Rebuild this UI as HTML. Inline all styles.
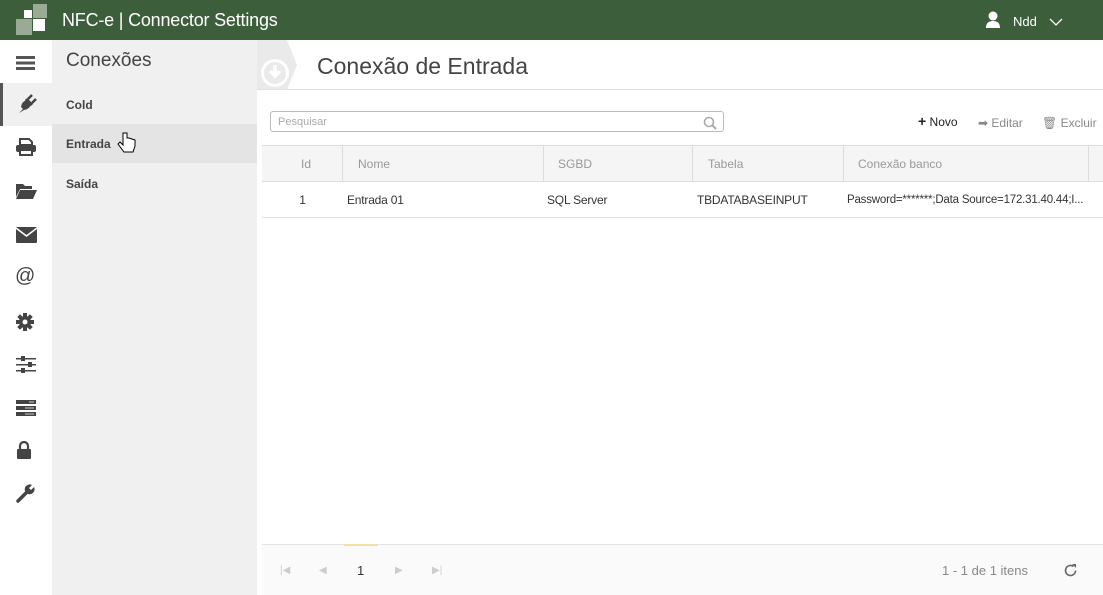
<!DOCTYPE html>
<html><head><meta charset="utf-8"><style>
*{box-sizing:border-box;margin:0;padding:0}
body{width:1103px;height:595px;overflow:hidden;font-family:"Liberation Sans",sans-serif;background:#fff;position:relative;color:#333}
.hdr{position:absolute;left:0;top:0;width:1103px;height:40px;background:#3d5e3b}
.abs{position:absolute;white-space:nowrap}
.side{position:absolute;left:0;top:40px;width:52px;height:555px;background:#fff}
.sub{position:absolute;left:52px;top:40px;width:205px;height:555px;background:#f0f0f0}
.ico{position:absolute;left:16px}
.th{position:absolute;top:146px;height:36px;line-height:36px;font-size:12px;color:#999;border-right:1px solid #ddd}
.td{position:absolute;top:182px;height:36px;line-height:36px;font-size:12px;color:#333;white-space:nowrap;letter-spacing:-0.2px}
</style></head><body>
<div class="hdr">
 <div class="abs" style="left:24px;top:10px;width:8px;height:8px;background:#fff"></div>
 <div class="abs" style="left:33px;top:4px;width:14px;height:14px;background:#9aaa97"></div>
 <div class="abs" style="left:16px;top:19px;width:16px;height:16px;background:#9aaa97"></div>
 <div class="abs" style="left:33px;top:19px;width:12px;height:12px;background:#fff"></div>
 <div class="abs" style="left:62px;top:10px;font-size:18px;color:#fff;letter-spacing:-0.2px">NFC-e | Connector Settings</div>
 <svg class="abs" style="left:985px;top:11px" width="16" height="18" viewBox="0 0 16 18"><circle cx="8" cy="5" r="4.5" fill="#fff"/><path d="M1 17 Q1 10 8 10 Q15 10 15 17Z" fill="#fff"/></svg>
 <div class="abs" style="left:1013px;top:14px;font-size:13px;color:#fff">Ndd</div>
 <svg class="abs" style="left:1049px;top:18px" width="14" height="8"><path d="M1 1 L7 7 L13 1" stroke="#fff" fill="none" stroke-width="1.3"/></svg>
</div>
<div class="side">
 <div class="abs" style="left:0;top:43px;width:52px;height:43px;background:#f0f0f0;border-left:3px solid #555"></div>
 <svg class="ico" style="top:16px" width="20" height="14"><rect y="0" width="19" height="3" fill="#555"/><rect y="5.5" width="19" height="3" fill="#555"/><rect y="11" width="19" height="3" fill="#555"/></svg>
 <svg class="ico" style="top:53px" width="22" height="22" viewBox="0 0 22 22"><path d="M3 20 L7 16 L5 14 Q6 8 11 7 L15 11 Q14 16 8 17 Z" fill="#444"/><path d="M12 6 L16 2 M16 10 L20 6" stroke="#444" stroke-width="2.5"/><path d="M10 6 L16 12" stroke="#444" stroke-width="3"/></svg>
 <svg class="ico" style="top:98px" width="20" height="18" viewBox="0 0 20 18"><path d="M4 1h9l3 3v3H4z" fill="none" stroke="#444" stroke-width="2"/><rect x="0" y="7" width="20" height="7" rx="2" fill="#444"/><rect x="4" y="12" width="12" height="5" fill="#fff" stroke="#444" stroke-width="2"/></svg>
 <svg class="ico" style="top:142px" width="21" height="17" viewBox="0 0 21 17"><path d="M0 2h7l2 2h7v3H4L0 15z" fill="#444"/><path d="M4 8h17l-4 9H0z" fill="#444"/></svg>
 <svg class="ico" style="top:187px" width="21" height="16" viewBox="0 0 21 16"><rect width="21" height="16" rx="1" fill="#444"/><path d="M0 1 L10.5 9 L21 1" stroke="#fff" stroke-width="1.5" fill="none"/></svg>
 <div class="ico" style="top:225px;font-size:20px;color:#444;left:15px">@</div>
 <svg class="ico" style="top:273px" width="18" height="18" viewBox="0 0 18 18"><g fill="#444"><circle cx="9" cy="9" r="6"/><rect x="7" y="0" width="4" height="18"/><rect x="0" y="7" width="18" height="4"/><rect x="7" y="0" width="4" height="18" transform="rotate(45 9 9)"/><rect x="7" y="0" width="4" height="18" transform="rotate(-45 9 9)"/></g><circle cx="9" cy="9" r="2.5" fill="#fff"/></svg>
 <svg class="ico" style="top:316px" width="20" height="18" viewBox="0 0 20 18"><g fill="#444"><rect y="2" width="20" height="1.5"/><rect y="8" width="20" height="1.5"/><rect y="14" width="20" height="1.5"/><rect x="5" y="0" width="4" height="5"/><rect x="12" y="6" width="4" height="5"/><rect x="5" y="12" width="4" height="5"/></g></svg>
 <svg class="ico" style="top:360px" width="20" height="16" viewBox="0 0 20 16"><g fill="#444"><rect width="20" height="4"/><rect y="6" width="20" height="4"/><rect y="12" width="20" height="4"/></g><g fill="#ccc"><rect x="13" y="1.5" width="5" height="1"/><rect x="9" y="7.5" width="9" height="1"/><rect x="9" y="13.5" width="9" height="1"/></g></svg>
 <svg class="ico" style="top:401px;left:17px" width="14" height="18" viewBox="0 0 14 18"><path d="M3 8V5a4 4 0 0 1 8 0v3" stroke="#444" stroke-width="2.2" fill="none"/><rect y="8" width="14" height="10" rx="1" fill="#444"/></svg>
 <svg class="ico" style="top:443px" width="20" height="20" viewBox="0 0 20 20"><path d="M2 18 L11 9" stroke="#444" stroke-width="3.5" stroke-linecap="round"/><path d="M9 8 A5 5 0 0 1 16 2 L13 5 L15 7 L18 4 A5 5 0 0 1 12 11Z" fill="#444"/></svg>
</div>
<div class="sub">
 <div class="abs" style="left:14px;top:10px;font-size:19px;color:#444">Conexões</div>
 <div class="abs" style="left:0;top:84px;width:205px;height:39px;background:#e4e4e4"></div>
 <div class="abs" style="left:14px;top:58px;font-size:12px;font-weight:bold;color:#444">Cold</div>
 <div class="abs" style="left:14px;top:97px;font-size:12px;font-weight:bold;color:#444">Entrada</div>
 <div class="abs" style="left:14px;top:137px;font-size:12px;font-weight:bold;color:#444">Saída</div>
</div>
<svg class="abs" style="left:257px;top:40px" width="40" height="50" viewBox="0 0 40 50"><path d="M0 0H30L40 25L30 50H0Z" fill="#eaeaea"/><circle cx="18" cy="33" r="14" fill="#fff"/><circle cx="18" cy="33" r="11" fill="#eaeaea"/><path d="M18 25v10M13 31l5 5 5-5" stroke="#fff" stroke-width="3.5" fill="none"/></svg>
<div class="abs" style="left:317px;top:53px;font-size:23px;color:#444">Conexão de Entrada</div>
<div class="abs" style="left:257px;top:89px;width:846px;height:1px;background:#e0e0e0"></div>
<div class="abs" style="left:270px;top:111px;width:454px;height:21px;border:1px solid #bbb;border-radius:3px;font-size:11px;color:#aaa;padding:4px 7px">Pesquisar</div>
<svg class="abs" style="left:703px;top:116px" width="14" height="14"><circle cx="6" cy="6" r="4.5" stroke="#aaa" stroke-width="1.6" fill="none"/><path d="M9 9l4 4" stroke="#aaa" stroke-width="2"/></svg>
<div class="abs" style="left:918px;top:115px;font-size:12px;color:#222"><b style="font-size:14px;line-height:12px">+</b> Novo</div>
<div class="abs" style="left:978px;top:116px;font-size:12px;color:#888">➡ Editar</div>
<div class="abs" style="left:1042px;top:116px;font-size:12px;color:#888">🗑 Excluir</div>
<div class="abs" style="left:262px;top:145px;width:841px;height:37px;background:#f5f5f5;border-top:1px solid #ddd;border-bottom:1px solid #ddd"></div>
<div class="th" style="left:262px;width:81px;text-align:center;padding-left:8px">Id</div>
<div class="th" style="left:343px;width:201px;padding-left:15px">Nome</div>
<div class="th" style="left:544px;width:149px;padding-left:14px">SGBD</div>
<div class="th" style="left:693px;width:151px;padding-left:15px">Tabela</div>
<div class="th" style="left:844px;width:245px;padding-left:14px">Conexão banco</div>
<div class="td" style="left:262px;width:81px;text-align:center">1</div>
<div class="td" style="left:347px">Entrada 01</div>
<div class="td" style="left:547px">SQL Server</div>
<div class="td" style="left:697px">TBDATABASEINPUT</div>
<div class="td" style="left:847px;font-size:11.5px">Password=*******;Data Source=172.31.40.44;I...</div>
<div class="abs" style="left:262px;top:217px;width:841px;height:1px;background:#ddd"></div>
<div class="abs" style="left:262px;top:544px;width:841px;height:51px;background:#fafafa;border-top:1px solid #e5e5e5"></div>
<div class="abs" style="left:344px;top:544px;width:34px;height:2px;background:#f0e0a8"></div>
<div class="abs" style="left:280px;top:565px;font-size:10px;color:#ccc">|◀</div>
<div class="abs" style="left:319px;top:565px;font-size:10px;color:#ccc">◀</div>
<div class="abs" style="left:357px;top:563px;font-size:13px;color:#333">1</div>
<div class="abs" style="left:395px;top:565px;font-size:10px;color:#ccc">▶</div>
<div class="abs" style="left:432px;top:565px;font-size:10px;color:#ccc">▶|</div>
<div class="abs" style="left:942px;top:563px;font-size:13px;color:#888">1 - 1 de 1 itens</div>
<svg class="abs" style="left:1063px;top:563px" width="15" height="15" viewBox="0 0 15 15"><path d="M12.5 7.5A5 5 0 1 1 10.5 3.5" stroke="#666" stroke-width="1.6" fill="none"/><path d="M9 1h4v4z" fill="#666"/></svg>
<svg class="abs" style="left:117px;top:131px" width="20" height="26" viewBox="0 0 20 26"><path d="M6 2v12l-3-3-2 2 6 8h9l2-6v-6l-3-1-3-1-2-0V2z" fill="#fff" stroke="#000" stroke-width="1"/></svg>
</body></html>
